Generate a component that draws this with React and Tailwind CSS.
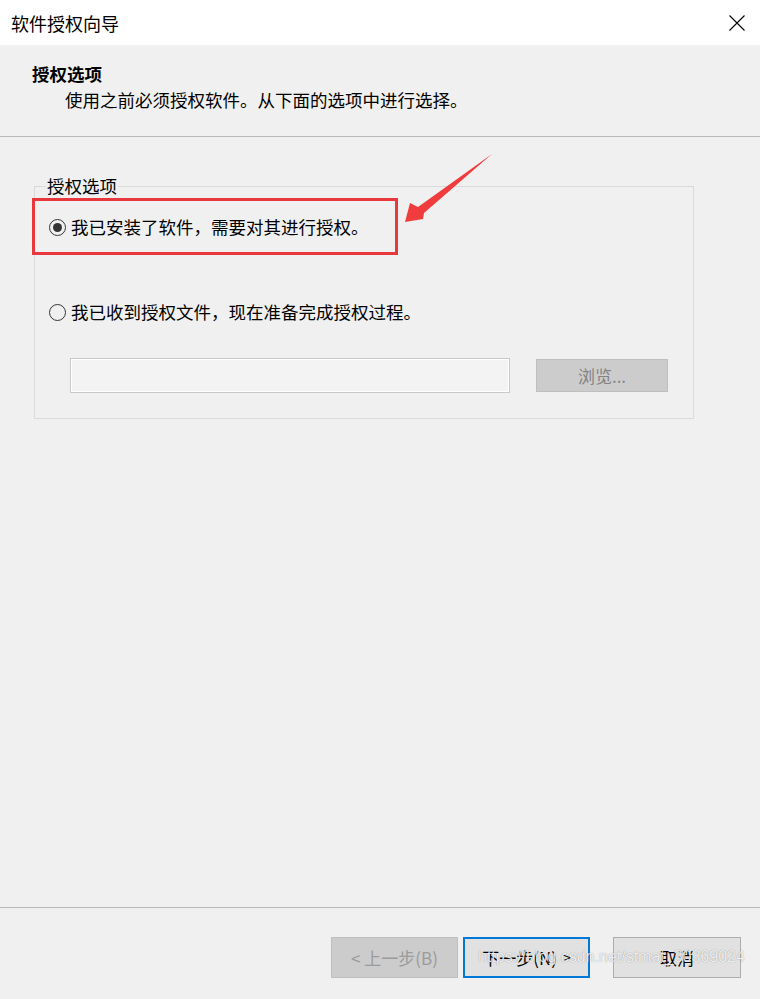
import React from "react";

const cjk = { fontFamily: '"Noto Sans CJK SC", "Noto Sans", sans-serif' };

function Radio({ checked }) {
  return (
    <span className="flex h-[17px] w-[17px] shrink-0 items-center justify-center rounded-full border border-[#333333] bg-[#f0f0f0]">
      {checked && <span className="h-[9px] w-[9px] rounded-full bg-[#333333]" />}
    </span>
  );
}

export default function App() {
  return (
    <div className="relative flex h-[999px] w-full flex-col overflow-hidden bg-[#f0f0f0] text-black" style={cjk}>
      {/* title bar */}
      <div className="flex h-[45px] shrink-0 items-center justify-between bg-white pl-[11px] pr-[15px]">
        <span className="text-[18px] leading-[24px]">软件授权向导</span>
        <svg width="16" height="16" viewBox="0 0 16 16" className="block">
          <path d="M0.5 0.5 L15.5 15.5 M15.5 0.5 L0.5 15.5" stroke="#000" strokeWidth="1.1" fill="none" />
        </svg>
      </div>

      {/* header */}
      <div className="h-[92px] shrink-0 border-b border-[#b9b9b9] pl-[32px] pt-[18px]">
        <div className="text-[17.5px] font-bold leading-[22px]">授权选项</div>
        <div className="ml-[33px] mt-[4px] text-[17.5px] leading-[22px]">使用之前必须授权软件。从下面的选项中进行选择。</div>
      </div>

      {/* body */}
      <div className="flex-1 pt-[38px]">
        <fieldset className="ml-[34px] w-[660px] border border-[#dadada] px-0 pb-[25px]">
          <legend className="ml-[11px] px-[1px] text-[17.5px] leading-[22px]">授权选项</legend>
          <div className="mt-[18px] flex h-[24px] items-center pl-[14px]">
            <Radio checked />
            <span className="ml-[5px] text-[17.5px] leading-[24px]">我已安装了软件，需要对其进行授权。</span>
          </div>
          <div className="mt-[61px] flex h-[24px] items-center pl-[14px]">
            <Radio />
            <span className="ml-[5px] text-[17.5px] leading-[24px]">我已收到授权文件，现在准备完成授权过程。</span>
          </div>
          <div className="mt-[34px] flex items-start pl-[35px]">
            <div className="h-[35px] w-[440px] border border-[#c9c9c9] bg-[#f3f3f3] shadow-[inset_0_0_0_1px_#ffffff]" />
            <div className="ml-[26px] mt-[1px] flex h-[33px] w-[132px] items-center justify-center border border-[#bfbfbf] bg-[#cccccc] text-[17px] text-[#838383]">
              浏览...
            </div>
          </div>
        </fieldset>
      </div>

      {/* footer */}
      <div className="flex h-[92px] shrink-0 items-start justify-end border-t border-[#b9b9b9] pr-[19px] pt-[29px]">
        <div className="flex h-[41px] w-[127px] items-center justify-center border border-[#bfbfbf] bg-[#cccccc] text-[17px] text-[#9b9b9b]">
          &lt; 上一步(B)
        </div>
        <div className="ml-[5px] flex h-[41px] w-[127px] items-center justify-center border-2 border-[#0078d7] bg-[#e1e1e1] text-[17px]">
          下一步(N) <span className="ml-[6px] text-[14px]">&gt;</span>
        </div>
        <div className="ml-[23px] flex h-[41px] w-[128px] items-center justify-center border border-[#adadad] bg-[#e1e1e1] text-[17px]">
          取消
        </div>
      </div>

      {/* annotation: red box */}
      <div className="pointer-events-none absolute left-[32px] top-[198px] h-[57px] w-[366px] border-[3px] border-[#e8383d]" />

      {/* annotation: arrow */}
      <svg className="pointer-events-none absolute left-0 top-0" width="760" height="999" viewBox="0 0 760 999">
        <polygon points="405,222 410,203 418,207 492,154 424,213 423,219" fill="#f03c3c" />
      </svg>

      {/* watermark */}
      <div
        className="pointer-events-none absolute left-[478px] top-[946px] text-[16px] leading-[22px] text-white/85 [text-shadow:0_0_1px_rgba(0,0,0,0.45)]"
        style={{ fontFamily: '"Liberation Sans", Arial, sans-serif' }}
      >
        https://blog.csdn.net/stmat_30369024
      </div>
    </div>
  );
}
